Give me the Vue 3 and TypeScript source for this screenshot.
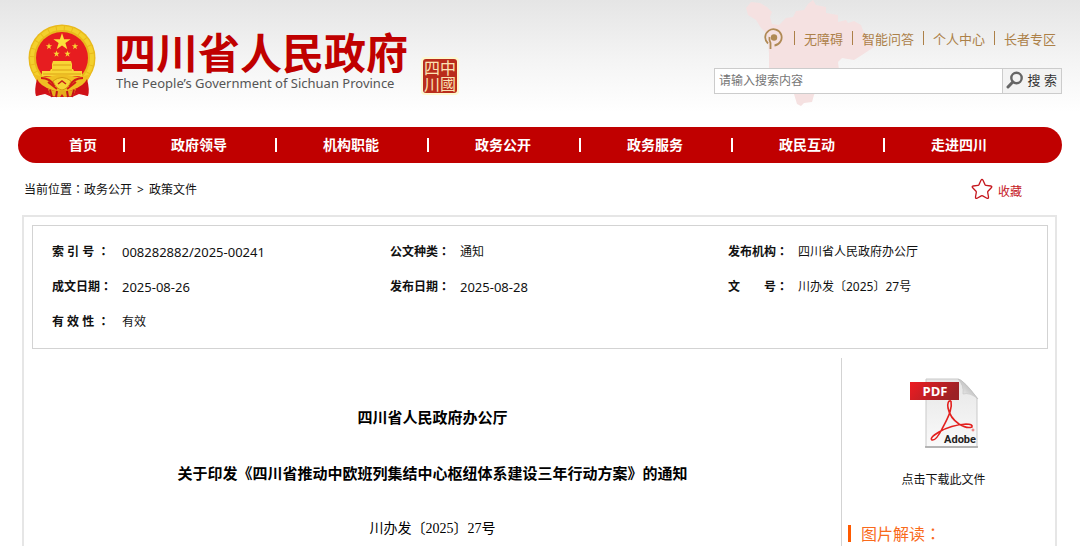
<script setup lang="ts">
import { ref } from 'vue'

interface MetaItem {
  label: string
  value: string
  numeric?: boolean
}

const keyword = ref('')

const topLinks: string[] = ['无障碍', '智能问答', '个人中心', '长者专区']

const navItems: string[] = ['首页', '政府领导', '机构职能', '政务公开', '政务服务', '政民互动', '走进四川']

const metaItems: MetaItem[] = [
  { label: '索 引 号 ', value: '008282882/2025-00241', numeric: true },
  { label: '公文种类', value: '通知' },
  { label: '发布机构', value: '四川省人民政府办公厅' },
  { label: '成文日期', value: '2025-08-26', numeric: true },
  { label: '发布日期', value: '2025-08-28', numeric: true },
  { label: '文\u3000\u3000号', value: '川办发〔2025〕27号' },
  { label: '有 效 性 ', value: '有效' },
]
</script>

<template>
  <div class="page">
    <header class="header">
      <svg class="map" viewBox="0 0 130 108" aria-hidden="true">
        <path
          d="M7 2 L2 8 L4 15 L12 20 L17 28 L22 33 L24 42 L25 53 L25 80 L33 93 L50 94 L53 104 L57 106 L60 103 L68 102 L70 95 L75 85 L90 80 L95 70 L94 62 L98 58 L110 60 L118 55 L130 47 L127 40 L120 33 L117 25 L110 21 L104 23 L102 20 L94 22 L94 15 L82 13 L82 7 L72 5 L69 0 L64 4 L60 10 L52 11 L49 17 L42 18 L35 25 L28 24 L26 17 L28 12 L23 7 L16 3 Z"
        />
      </svg>

      <a class="brand" href="#">
        <svg class="emblem" viewBox="0 0 68 74" role="img" aria-label="国徽">
          <path d="M12 54 L8 72 L17 70 L24 73 L44 73 L51 70 L60 72 L56 54 Z" fill="#d5141b" />
          <circle cx="34" cy="34" r="33.5" fill="#e9b91c" />
          <circle cx="34" cy="34" r="30" fill="none" stroke="#f3d02c" stroke-width="4" stroke-dasharray="7 1" />
          <circle cx="34" cy="34" r="26" fill="#e71d20" />
          <polygon points="34,9 36.1,15.2 42.6,15.2 37.4,19.1 39.3,25.3 34,21.6 28.7,25.3 30.6,19.1 25.4,15.2 31.9,15.2" fill="#fbe13a" />
          <g fill="#f8d535">
            <path id="s" d="M21 19 l.8 2.3 h2.4 l-2 1.5 .8 2.4 -2-1.5 -2 1.5 .8-2.4 -2-1.5 h2.4z" />
            <use href="#s" x="26" />
            <use href="#s" x="7.500" y="7.500" />
            <use href="#s" x="18.500" y="7.500" />
            <path d="M24 40 L25 37 H43 L44 40 V45 H45 L46 47 H54 V52 H14 V47 H22 L23 45 H24Z" />
          </g>
          <path d="M25 41 H43 M24 46 H44 M15 50 H53" stroke="#dca016" fill="none" />
          <path d="M5 50 Q16 54 24 52 Q34 49 44 52 Q52 54 63 50 L57 62 Q34 72 11 62Z" fill="#efbf23" />
          <path d="M13 54 Q22 54 27 62 M55 54 Q46 54 41 62 M20 58 L29 65 M48 58 L39 65" fill="none" stroke="#d21b18" stroke-width="2" />
          <path d="M25 57 Q34 50 43 57 Q40 65 34 66 Q28 65 25 57Z" fill="#f6d335" stroke="#d59a13" />
          <path d="M30 60 L34 57 L38 60" fill="none" stroke="#c5201b" stroke-width="1.500" />
          <path d="M9 55 Q6 66 8 72 L17 69 L24 66 Q12 62 9 55 M59 55 Q62 66 60 72 L51 69 L44 66 Q56 62 59 55" fill="#cf1118" />
          <path d="M20 65 Q27 68 34 66 Q41 68 48 65 L45 72 L36 73 L34 70 L32 73 L23 72Z" fill="#e5ad1d" />
          <path d="M22 66 L24 73 M29 67 L28 73 M39 67 L40 73 M46 66 L44 73" stroke="#c3131a" stroke-width="2" />
        </svg>
        <span class="brand-text">
          <span class="brand-cn">四川省人民政府</span>
          <span class="brand-en">The People’s Government of Sichuan Province</span>
        </span>
        <svg class="seal" viewBox="0 0 40 40" role="img" aria-label="中国四川">
          <rect x="1" y="1" width="38" height="38" rx="4" fill="#fdf7cf" />
          <rect x="3" y="3" width="34" height="34" rx="3" fill="#b92c1c" />
          <g class="seal-text">
            <text x="4" y="18">四</text>
            <text x="20" y="18">中</text>
            <text x="4" y="34">川</text>
            <text x="20" y="34">國</text>
          </g>
        </svg>
      </a>

      <div class="tools">
        <nav class="top-links" aria-label="快捷链接">
          <a class="dot-link" href="#" aria-label="无障碍浏览">
            <svg viewBox="0 0 20 22">
              <path d="M4 15.500 A8.200 8.200 0 1 1 10.500 17.500" fill="none" stroke="#b08a55" stroke-width="1.800" />
              <path d="M6.500 21 V15 Q5 12.500 5.500 9" fill="none" stroke="#b08a55" stroke-width="1.800" />
              <circle cx="10" cy="9.500" r="3.200" fill="#b08a55" />
            </svg>
          </a>
          <a v-for="link in topLinks" :key="link" class="top-link" href="#">{{ link }}</a>
        </nav>
        <form class="search" role="search" @submit.prevent>
          <input v-model="keyword" type="text" placeholder="请输入搜索内容" aria-label="搜索内容" />
          <button type="submit">
            <svg viewBox="0 0 18 18" aria-hidden="true">
              <circle cx="10.500" cy="7" r="5.200" fill="none" stroke="#666" stroke-width="2.400" />
              <path d="M6.800 11 L2 16" stroke="#666" stroke-width="3" stroke-linecap="round" />
            </svg>
            <span>搜 索</span>
          </button>
        </form>
      </div>
    </header>

    <nav class="main-nav" aria-label="主导航">
      <a v-for="item in navItems" :key="item" href="#">{{ item }}</a>
    </nav>

    <div class="crumb-row">
      <div class="crumbs">
        当前位置<span class="colon">：</span><a href="#">政务公开</a><span class="arrow">&gt;</span><a href="#">政策文件</a>
      </div>
      <button class="favorite" type="button">
        <svg viewBox="0 0 22 22" aria-hidden="true">
          <path
            d="M10 2.200 Q11 .4 12 2.200 L14 6.600 Q14.300 7.200 15 7.300 L19.800 8 Q21.600 8.400 20.300 9.800 L17 13.200 Q16.600 13.700 16.700 14.300 L17.500 19 Q17.600 21 15.900 20.200 L11.700 17.900 Q11 17.500 10.300 17.900 L6.100 20.200 Q4.400 21 4.500 19 L5.300 14.300 Q5.400 13.700 5 13.200 L1.700 9.800 Q.4 8.400 2.200 8 L7 7.300 Q7.700 7.200 8 6.600 Z"
            fill="none"
            stroke="#c5161d"
            stroke-width="1.300"
          />
        </svg>
        <span>收藏</span>
      </button>
    </div>

    <main class="content">
      <dl class="meta">
        <div v-for="item in metaItems" :key="item.label" class="meta-item">
          <dt>{{ item.label }}<span class="colon">：</span></dt>
          <dd :class="{ numeric: item.numeric }">{{ item.value }}</dd>
        </div>
      </dl>

      <div class="columns">
        <article class="document">
          <h1>四川省人民政府办公厅</h1>
          <h2>关于印发《四川省推动中欧班列集结中心枢纽体系建设三年行动方案》的通知</h2>
          <p>川办发〔2025〕27号</p>
        </article>

        <aside class="side">
          <a class="download" href="#">
            <svg class="pdf" viewBox="0 0 70 72" aria-hidden="true">
              <defs>
                <linearGradient id="paper" x1="0" y1="0" x2="0" y2="1">
                  <stop offset="0" stop-color="#e6e6e6" />
                  <stop offset="1" stop-color="#fafafa" />
                </linearGradient>
                <linearGradient id="ribbon" x1="0" y1="0" x2="1" y2="0.300">
                  <stop offset="0" stop-color="#ee1c22" />
                  <stop offset="1" stop-color="#9c2226" />
                </linearGradient>
                <linearGradient id="fold" x1="0" y1="1" x2="1" y2="0">
                  <stop offset="0" stop-color="#fff" />
                  <stop offset="1" stop-color="#999" />
                </linearGradient>
              </defs>
              <path d="M17 1 H49 Q53 1 68 20 V69 H17 Z" fill="url(#paper)" stroke="#c9c9c9" />
              <path d="M16 69 H69" stroke="#a5a5a5" stroke-width="1.500" />
              <path d="M49 1 Q55 2 69 21 Q61 14 54 16 Q55 7 49 1Z" fill="url(#fold)" stroke="#bbb" stroke-width=".5" />
              <path
                d="M42 23 Q38 22 39 30 Q41 40 50 46 Q58 51 63 49 Q64 46 57 46 Q42 47 30 54 Q20 60 23 62 Q27 63 33 51 Q39 40 41 34 Q43 28 42 23"
                fill="none"
                stroke="#e3211f"
                stroke-width="1.600"
              />
              <circle cx="64" cy="52" r="1" fill="none" stroke="#e3211f" stroke-width=".6" />
              <rect x="1" y="4" width="49" height="18" fill="url(#ribbon)" />
              <text class="pdf-tag" x="26" y="18">PDF</text>
              <text class="pdf-brand" x="67" y="65">Adobe</text>
            </svg>
            <span>点击下载此文件</span>
          </a>
          <h3>图片解读<span class="colon">：</span></h3>
        </aside>
      </div>
    </main>
  </div>
</template>

<style>
body {
  margin: 0;
  background: #fff;
}
</style>

<style scoped>
.page {
  display: flex;
  flex-direction: column;
  min-height: 100vh;
  box-sizing: border-box;
  font-family: 'Noto Sans', 'Noto Sans CJK SC', sans-serif;
  font-size: 12px;
  line-height: 20px;
  color: #111;
}

a {
  color: inherit;
  text-decoration: none;
}

button,
input {
  font: inherit;
  color: inherit;
  border: 0;
  padding: 0;
  margin: 0;
  background: none;
}

.colon {
  font-family: 'Noto Sans CJK TC', sans-serif;
}

.header {
  position: relative;
  display: flex;
  justify-content: space-between;
  align-items: flex-start;
  height: 127px;
  padding: 0 18px 0 28px;
  box-sizing: border-box;
  background: linear-gradient(#e5e5e5, #f4f4f4 60px, #fff 112px);
}

.map {
  position: absolute;
  top: 0;
  right: 206px;
  width: 130px;
  height: 108px;
  fill: #f5e1e1;
}

.brand {
  display: flex;
  align-items: flex-start;
  padding-top: 24px;
}

.emblem {
  width: 68px;
  height: 74px;
}

.brand-text {
  display: flex;
  flex-direction: column;
  margin-left: 18px;
  padding-top: 5px;
}

.brand-cn {
  font-family: 'Noto Sans CJK SC', sans-serif;
  font-size: 42px;
  line-height: 44px;
  font-weight: 700;
  color: #c00000;
}

.brand-en {
  padding-left: 2px;
  font-size: 13px;
  line-height: 20px;
  color: #555;
}

.seal {
  width: 40px;
  height: 40px;
  margin: 32px 0 0 12px;
}

.seal-text {
  font-family: 'Noto Sans CJK TC', sans-serif;
  font-size: 16px;
  fill: #fbe3b4;
}

.tools {
  position: relative;
  display: flex;
  flex-direction: column;
  width: 348px;
  padding-top: 28px;
}

.top-links {
  display: flex;
  justify-content: flex-end;
  align-items: center;
  height: 22px;
  margin-bottom: 18px;
  padding-right: 6px;
  font-size: 13px;
  color: #ac8048;
}

.dot-link {
  display: flex;
  margin-right: 10px;
}

.dot-link svg {
  width: 20px;
  height: 22px;
}

.top-link {
  display: flex;
  align-items: center;
}

.top-link::before {
  content: '';
  height: 14px;
  margin-right: 9px;
  margin-bottom: 2px;
  border-left: 1px solid #ac8048;
}

.top-link + .top-link {
  margin-left: 9px;
}

.search {
  display: flex;
  height: 26px;
  box-sizing: border-box;
  border: 1px solid #ccc;
  background: #fff;
}

.search input {
  flex: 1;
  min-width: 0;
  padding-left: 4px;
  outline: none;
}

.search input::placeholder {
  color: #757575;
  opacity: 1;
}

.search button {
  display: flex;
  align-items: center;
  gap: 4px;
  padding: 0 4px 2px 3px;
  border-left: 1px solid #ccc;
  background: #f3f3f3;
  font-size: 13px;
  color: #333;
}

.search button svg {
  width: 18px;
  height: 18px;
}

.main-nav {
  display: flex;
  height: 36px;
  margin: 0 18px;
  padding: 0 27px 0 25px;
  border-radius: 18px;
  background: #c00000;
  font-size: 14px;
  font-weight: 700;
  color: #fff;
}

.main-nav a {
  display: flex;
  flex: 152 1 0;
  align-items: center;
  justify-content: center;
}

.main-nav a:first-child {
  flex-grow: 80;
}

.main-nav a + a::before {
  content: '';
  width: 2px;
  height: 14px;
  margin-right: auto;
  background: #fff;
}

.main-nav a + a::after {
  content: '';
  width: 2px;
  margin-left: auto;
}

.crumb-row {
  display: flex;
  justify-content: space-between;
  align-items: center;
  height: 52px;
  padding: 0 58px 0 24px;
}

.arrow {
  margin: 0 5px;
}

.favorite {
  display: flex;
  align-items: center;
  gap: 5px;
  color: #c5161d;
  cursor: pointer;
}

.favorite svg {
  width: 22px;
  height: 22px;
}

.favorite span {
  padding-top: 6px;
}

.content {
  display: flex;
  flex: 1;
  flex-direction: column;
  margin: 0 23px 0 22px;
  border: 2px solid #e6e6e6;
  border-bottom: 0;
}

.meta {
  display: grid;
  grid-template-columns: repeat(3, 1fr);
  margin: 8px 7px 0 8px;
  padding: 8px 0 9px;
  border: 1px solid #d3d3d3;
}

.meta-item {
  display: flex;
  align-items: center;
  height: 35px;
  padding-left: 19px;
}

.meta dt {
  min-width: 70px;
  font-weight: 700;
  white-space: pre;
}

.meta dd {
  margin: 0;
}

.meta .numeric {
  font-size: 13px;
}

.columns {
  display: grid;
  flex: 1;
  grid-template-columns: 1fr 214px;
  margin-top: 9px;
}

.document {
  padding-top: 47px;
  text-align: center;
  color: #000;
}

.document h1,
.document h2 {
  margin: 0 0 32px;
  font-size: 15px;
  line-height: 24px;
  font-weight: 700;
}

.document p {
  margin: 0;
  font-family: 'Liberation Serif', 'Noto Sans CJK SC', serif;
  font-size: 14px;
  line-height: 24px;
}

.side {
  border-left: 1px solid #d3d3d3;
}

.download {
  display: flex;
  flex-direction: column;
  align-items: center;
  gap: 20px;
  padding: 20px 10px 0 0;
}

.pdf {
  width: 70px;
  height: 72px;
}

.pdf-tag {
  font-family: 'Open Sans', sans-serif;
  font-size: 13px;
  font-weight: 700;
  text-anchor: middle;
  fill: #fff;
}

.pdf-brand {
  font-family: Roboto, sans-serif;
  font-size: 11px;
  font-weight: 700;
  text-anchor: end;
  fill: #222;
}

.side h3 {
  margin: 35px 0 0 6px;
  padding-left: 10px;
  border-left: 3px solid #ff5a00;
  font-size: 16px;
  line-height: 16px;
  font-weight: 400;
  color: #f96a1b;
}
</style>
